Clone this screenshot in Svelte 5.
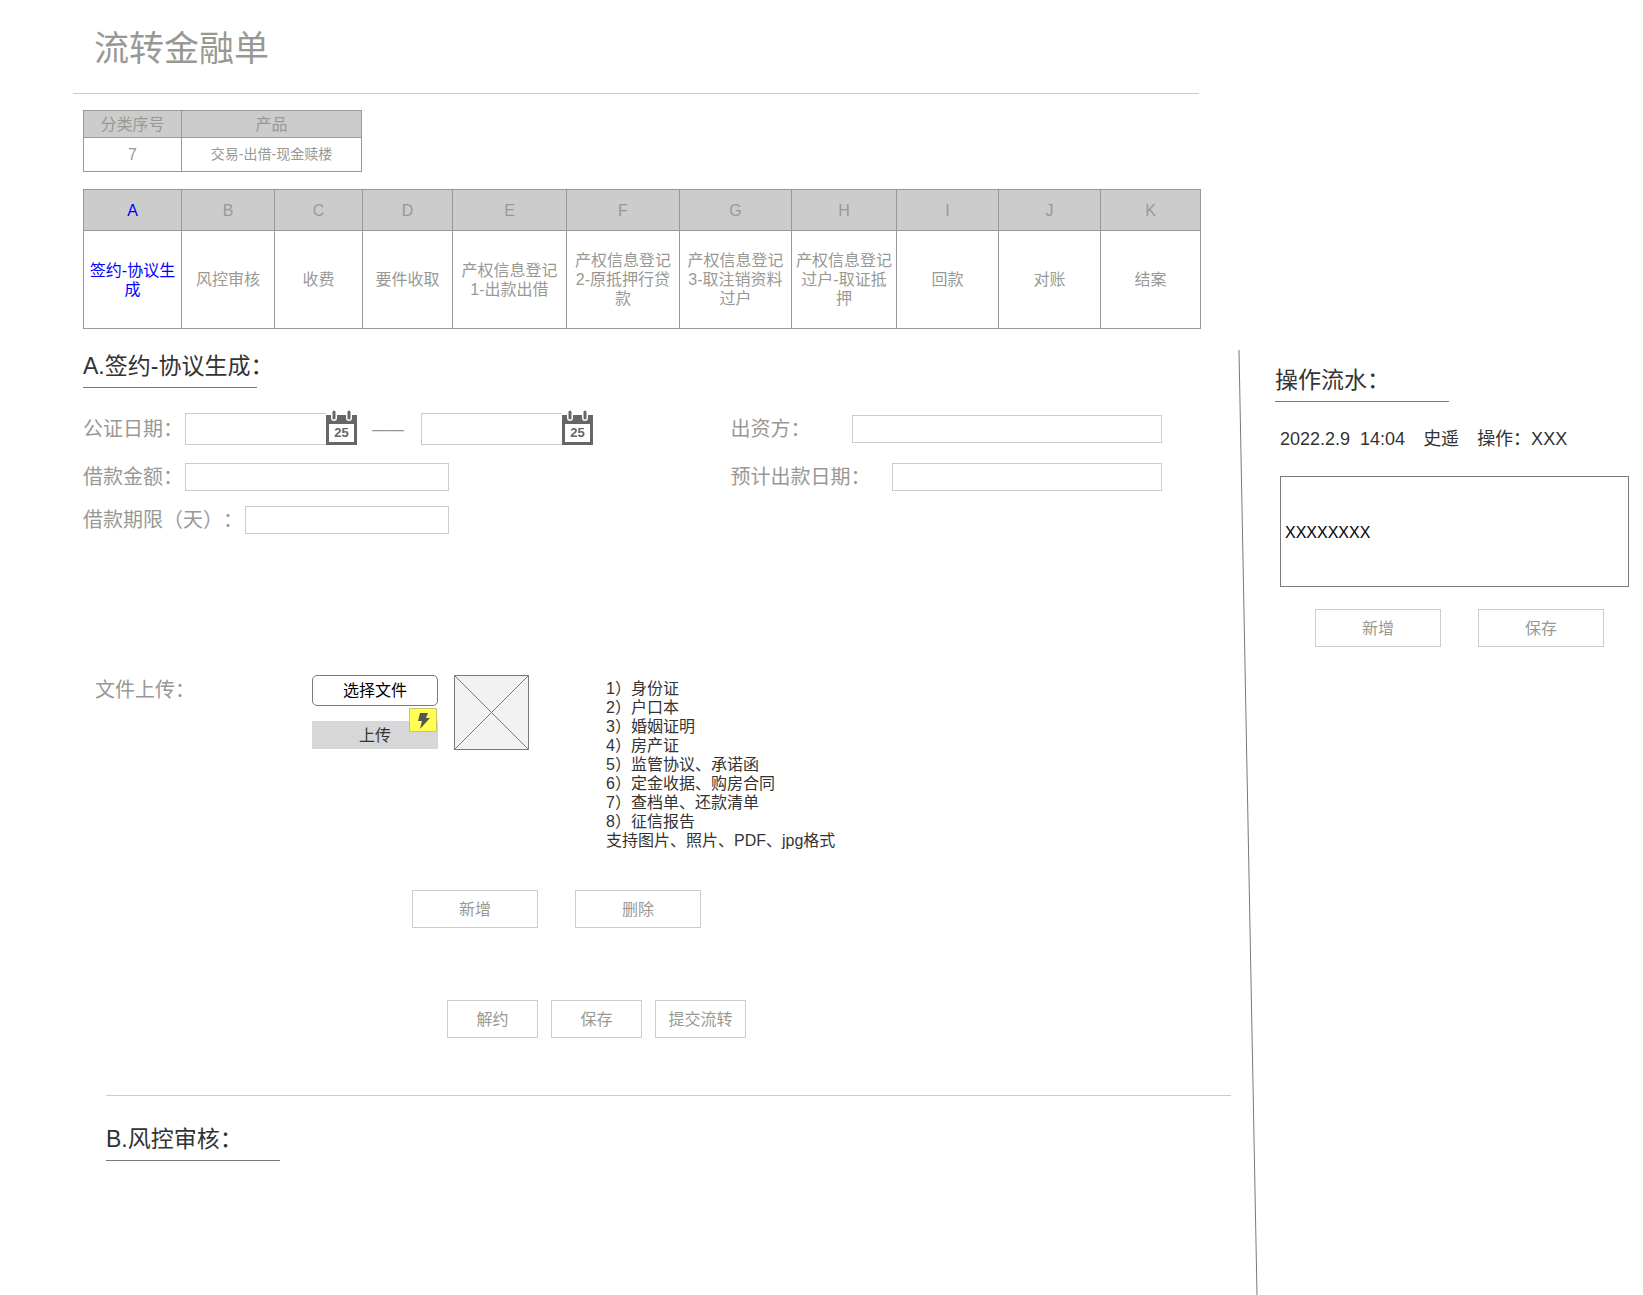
<script lang="ts">
	const stages = [
		{ key: 'A', name: '签约-协议生成', width: 98 },
		{ key: 'B', name: '风控审核', width: 93 },
		{ key: 'C', name: '收费', width: 88 },
		{ key: 'D', name: '要件收取', width: 90 },
		{ key: 'E', name: '产权信息登记\n1-出款出借', width: 114 },
		{ key: 'F', name: '产权信息登记\n2-原抵押行贷\n款', width: 113 },
		{ key: 'G', name: '产权信息登记\n3-取注销资料\n过户', width: 112 },
		{ key: 'H', name: '产权信息登记\n过户-取证抵\n押', width: 105 },
		{ key: 'I', name: '回款', width: 102 },
		{ key: 'J', name: '对账', width: 102 },
		{ key: 'K', name: '结案', width: 100 }
	];
	const total = stages.reduce((sum, s) => sum + s.width, 0);

	const documents = [
		'身份证',
		'户口本',
		'婚姻证明',
		'房产证',
		'监管协议、承诺函',
		'定金收据、购房合同',
		'查档单、还款清单',
		'征信报告'
	];

	let current = $state('A');
	let dateFrom = $state('');
	let dateTo = $state('');
	let note = $state('XXXXXXXX');
</script>

{#snippet calendar()}
	<svg class="calendar" viewBox="0 0 31 35" aria-hidden="true">
		<path fill="#666" d="M0 5h31v30H0z" />
		<path fill="#fff" d="M3 14h25v18H3z" />
		<path fill="#fff" d="M5 0h6v8a3 3 0 0 1-6 0zM20 0h6v8a3 3 0 0 1-6 0z" />
		<path stroke="#666" stroke-width="3" stroke-linecap="round" d="M8 2v6M23 2v6" />
		<text x="15.5" y="27" text-anchor="middle">25</text>
	</svg>
{/snippet}

<div class="page">
	<header>
		<h1>流转金融单</h1>
	</header>

	<div class="tables">
		<table class="product">
			<thead>
				<tr><th class="serial">分类序号</th><th>产品</th></tr>
			</thead>
			<tbody>
				<tr><td>7</td><td class="small">交易-出借-现金赎楼</td></tr>
			</tbody>
		</table>

		<table class="stages">
			<colgroup>
				{#each stages as stage}
					<col style="width: {(stage.width / total) * 100}%" />
				{/each}
			</colgroup>
			<thead>
				<tr>
					{#each stages as stage}
						<th class:active={stage.key === current}>{stage.key}</th>
					{/each}
				</tr>
			</thead>
			<tbody>
				<tr>
					{#each stages as stage}
						<td class:active={stage.key === current}>{stage.name}</td>
					{/each}
				</tr>
			</tbody>
		</table>
	</div>

	<div class="content">
		<main>
			<section class="sign">
				<h2>A.签约-协议生成：</h2>

				<div class="form">
					<div class="field">
						<label for="date-from">公证日期：</label>
						<input id="date-from" class="date" bind:value={dateFrom} />
						<button class="pick" aria-label="选择日期">{@render calendar()}</button>
						<span class="dash">——</span>
						<input class="date" aria-label="公证日期" bind:value={dateTo} />
						<button class="pick" aria-label="选择日期">{@render calendar()}</button>
					</div>
					<div class="field">
						<label for="funder">出资方：</label>
						<input id="funder" class="funder" />
					</div>
					<div class="field short">
						<label for="amount">借款金额：</label>
						<input id="amount" />
					</div>
					<div class="field">
						<label for="pay-date">预计出款日期：</label>
						<input id="pay-date" class="pay-date" />
					</div>
					<div class="field short">
						<label for="term">借款期限（天）：</label>
						<input id="term" />
					</div>
				</div>
			</section>

			<section class="upload">
				<span class="upload-label">文件上传：</span>
				<div class="files">
					<button class="choose">选择文件</button>
					<button class="send">
						上传
						<svg class="bolt" viewBox="0 0 28 24" aria-hidden="true">
							<path fill="#ffff54" stroke="#c9c66a" d="M.5.5h27v23H.5z" />
							<path fill="#555" d="M11 5h8l-2 5h4l-10 11 2-8H9z" />
						</svg>
					</button>
				</div>
				<svg class="preview" viewBox="0 0 75 75" aria-hidden="true">
					<path fill="#f2f2f2" stroke="#797979" d="M.5.5h74v74H.5zL74.5 74.5M74.5.5L.5 74.5" />
				</svg>
				<div class="documents">
					{#each documents as name, i}
						<div>{i + 1}）{name}</div>
					{/each}
					<div>支持图片、照片、PDF、jpg格式</div>
				</div>
			</section>

			<div class="actions">
				<button class="btn">新增</button>
				<button class="btn">删除</button>
			</div>

			<div class="actions flow">
				<button class="btn">解约</button>
				<button class="btn">保存</button>
				<button class="btn">提交流转</button>
			</div>

			<section class="risk">
				<h2>B.风控审核：</h2>
			</section>
		</main>

		<svg class="divider" viewBox="0 0 20 944" preserveAspectRatio="none" aria-hidden="true">
			<path stroke="#797979" vector-effect="non-scaling-stroke" d="M1 0L19 944" />
		</svg>

		<aside>
			<h2>操作流水：</h2>
			<p class="entry">
				<span>2022.2.9&nbsp; 14:04</span>
				<span>史遥</span>
				<span>操作：XXX</span>
			</p>
			<textarea aria-label="操作流水" bind:value={note}></textarea>
			<div class="log-actions">
				<button class="btn">新增</button>
				<button class="btn">保存</button>
			</div>
		</aside>
	</div>
</div>

<style>
	:global(body) {
		margin: 0;
		background: #fff;
	}

	.page {
		display: flex;
		flex-direction: column;
		min-height: 100vh;
		font-family: 'Liberation Sans', 'Noto Sans CJK SC', sans-serif;
		font-size: 16px;
		line-height: 19px;
		color: #999994;
		text-spacing-trim: space-all;
	}

	.page * {
		box-sizing: border-box;
	}

	button,
	input,
	textarea {
		margin: 0;
		font: inherit;
		color: inherit;
		background: #fff;
		border: 1px solid #ccc;
		border-radius: 0;
	}

	button {
		padding: 0;
		cursor: pointer;
	}

	header {
		margin: 0 444px 0 73px;
		padding: 24px 21px 20px;
		border-bottom: 1px solid #ccc;
	}

	h1 {
		margin: 0;
		font-size: 35px;
		font-weight: 400;
		line-height: 49px;
	}

	.tables {
		margin: 16px 442px 0 83px;
	}

	table {
		border-collapse: collapse;
		table-layout: fixed;
	}

	th,
	td {
		padding: 0 1px;
		border: 1px solid #999994;
		font-weight: 400;
		text-align: center;
		white-space: pre-line;
	}

	th {
		background: #ccc;
	}

	.product {
		width: 279px;
		margin-bottom: 17px;
	}

	.product th {
		height: 27px;
	}

	.product td {
		height: 34px;
	}

	.serial {
		width: 98px;
	}

	.small {
		font-size: 14px;
	}

	.stages {
		width: 100%;
	}

	.stages th {
		height: 41px;
	}

	.stages td {
		height: 98px;
	}

	.active {
		color: #00f;
	}

	.content {
		flex: 1;
		display: grid;
		grid-template-columns: minmax(0, 1fr) 20px 385px;
		margin-top: 21px;
	}

	h2 {
		width: 174px;
		margin: 0;
		padding-bottom: 5px;
		border-bottom: 1px solid #797979;
		font-size: 23px;
		font-weight: 400;
		line-height: 32px;
		color: #333;
		white-space: nowrap;
	}

	.sign {
		padding: 0 76px 0 83px;
	}

	.form {
		display: grid;
		grid-template-columns: 3fr 2fr;
		grid-template-rows: 36px 60px 26px;
		align-items: center;
		margin-top: 23px;
	}

	.field {
		display: flex;
		align-items: center;
	}

	.field label {
		font-size: 20px;
		line-height: 28px;
		white-space: nowrap;
	}

	.field input {
		flex: 1;
		min-width: 0;
		height: 28px;
		margin-left: 2px;
		padding: 0 4px;
	}

	.short {
		width: 366px;
	}

	.field .date {
		flex: none;
		width: 141px;
		height: 32px;
		border-right: 0;
	}

	.pick {
		display: flex;
		padding-bottom: 3px;
		border: 0;
		background: none;
	}

	.calendar {
		width: 31px;
		height: 35px;
	}

	.calendar text {
		font: bold 13px 'Liberation Sans', sans-serif;
		fill: #666;
	}

	.dash {
		width: 62px;
		text-align: center;
	}

	.field .funder {
		margin-left: 42px;
	}

	.field .pay-date {
		margin-left: 22px;
	}

	.upload {
		display: flex;
		align-items: flex-start;
		margin-top: 142px;
		padding-left: 95px;
	}

	.upload-label {
		width: 217px;
		font-size: 20px;
		line-height: 30px;
	}

	.files {
		display: flex;
		flex-direction: column;
		gap: 15px;
		width: 126px;
	}

	.choose {
		height: 31px;
		border-color: #797979;
		border-radius: 5px;
		color: #000;
	}

	.send {
		position: relative;
		height: 28px;
		border: 0;
		background: #d7d7d7;
		color: #333;
	}

	.bolt {
		position: absolute;
		top: -13px;
		right: 1px;
		width: 28px;
		height: 24px;
	}

	.preview {
		width: 75px;
		height: 75px;
		margin: 0 77px 0 16px;
	}

	.documents {
		padding-top: 4px;
		color: #333;
	}

	.actions {
		display: flex;
		gap: 37px;
		margin-top: 40px;
		padding-left: 412px;
	}

	.btn {
		width: 126px;
		height: 38px;
	}

	.flow {
		gap: 13px;
		margin-top: 72px;
		padding-left: 447px;
	}

	.flow .btn {
		width: 91px;
	}

	.risk {
		margin: 57px 7px 0 106px;
		padding: 27px 0 80px;
		border-top: 1px solid #ccc;
	}

	.divider {
		width: 20px;
		height: 100%;
	}

	aside {
		padding: 14px 14px 0 17px;
	}

	.entry {
		display: flex;
		gap: 18px;
		margin: 24px 0;
		padding-left: 5px;
		font-size: 18px;
		line-height: 26px;
		color: #333;
		white-space: nowrap;
	}

	textarea {
		display: block;
		width: 349px;
		height: 111px;
		margin-left: 5px;
		padding: 46px 4px 0;
		border-color: #797979;
		color: #000;
		resize: none;
	}

	.log-actions {
		display: flex;
		gap: 37px;
		margin-top: 22px;
		padding-left: 40px;
	}
</style>
